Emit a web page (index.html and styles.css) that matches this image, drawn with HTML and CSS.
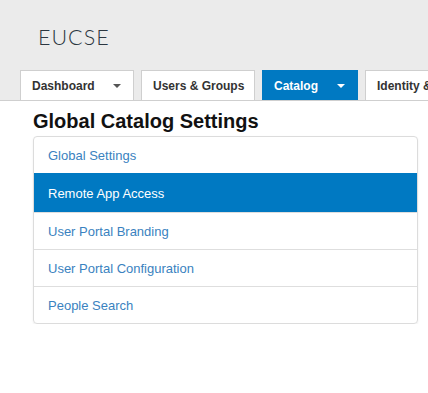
FILE: index.html
```html
<!DOCTYPE html>
<html lang="en">

<head>
    <meta charset="UTF-8">
    <meta name="viewport" content="width=device-width, initial-scale=1.0">
    <title>Global Catalog Settings</title>

    <link rel="stylesheet" href="styles.css">
</head>

<body>
    <!-- 顶部区域 -->
    <div class="header">
        <div class="brand">EUCSE</div>
        <div class="tabs">
            <div class="tab tab-drop">Dashboard<span class="caret"></span></div>
            <div class="tab">Users &amp; Groups</div>
            <div class="tab tab-drop active">Catalog<span class="caret"></span></div>
            <div class="tab">Identity &amp; Access Management</div>
        </div>
    </div>
    <!-- 内容区域 -->
    <div class="content">
        <h1 class="title">Global Catalog Settings</h1>
        <div class="list">
            <a class="list-item">Global Settings</a>
            <a class="list-item active">Remote App Access</a>
            <a class="list-item">User Portal Branding</a>
            <a class="list-item">User Portal Configuration</a>
            <a class="list-item">People Search</a>
        </div>
    </div>
</body>

</html>
```

FILE: styles.css
```css
*,
*:after {
    box-sizing: border-box;
}

body {
    margin: 0;
    background: #fff;
    font-family: "Liberation Sans", Arial, sans-serif;
    overflow: hidden;
}

/* 顶部 */

.header {
    background: #ebebeb;
    height: 101px;
    border-bottom: 1px solid #cfcfcf;
    padding-top: 24px;
}

.brand {
    font-family: Lato, "Liberation Sans", sans-serif;
    font-weight: 300;
    font-size: 21.5px;
    line-height: 26px;
    color: #2b3640;
    padding-left: 38px;
    letter-spacing: 1px;
}

.tabs {
    display: flex;
    gap: 7px;
    padding-left: 20px;
    margin-top: 20px;
    white-space: nowrap;
}

.tab {
    flex: none;
    height: 30px;
    display: flex;
    align-items: center;
    padding: 0 11px;
    background: #fff;
    border: 1px solid #cfcfcf;
    border-bottom: 0;
    font-size: 12px;
    font-weight: bold;
    color: #333;
}

.tab-drop {
    width: 114px;
    justify-content: space-between;
    padding-right: 12px;
}

.tab.active {
    width: 96px;
    background: #0079c2;
    border-color: #0079c2;
    color: #fff;
}

.caret {
    width: 0;
    height: 0;
    border-left: 4px solid transparent;
    border-right: 4px solid transparent;
    border-top: 4px solid #555;
    margin-top: 1px;
}

.tab.active .caret {
    border-top-color: #fff;
}

.tab:nth-child(2) {
    width: 114px;
}

/* 内容 */

.content {
    padding: 10px 10px 0 33px;
}

.title {
    margin: 0 0 5px;
    font-size: 20px;
    line-height: 20px;
    font-weight: bold;
    color: #111;
}

.list {
    width: 385px;
    border: 1px solid #dcdcdc;
    border-radius: 4px;
    box-shadow: 0 1px 2px rgba(0, 0, 0, 0.08);
    overflow: hidden;
}

.list-item {
    display: flex;
    align-items: center;
    height: 37px;
    padding: 0 14px;
    border-top: 1px solid #dedede;
    font-size: 13px;
    color: #3a82c0;
    cursor: pointer;
}

.list-item:first-child {
    height: 36px;
    border-top: 0;
}

.list-item.active {
    height: 39px;
    background: #0079c2;
    border-top-color: #0079c2;
    color: #fff;
}
```
